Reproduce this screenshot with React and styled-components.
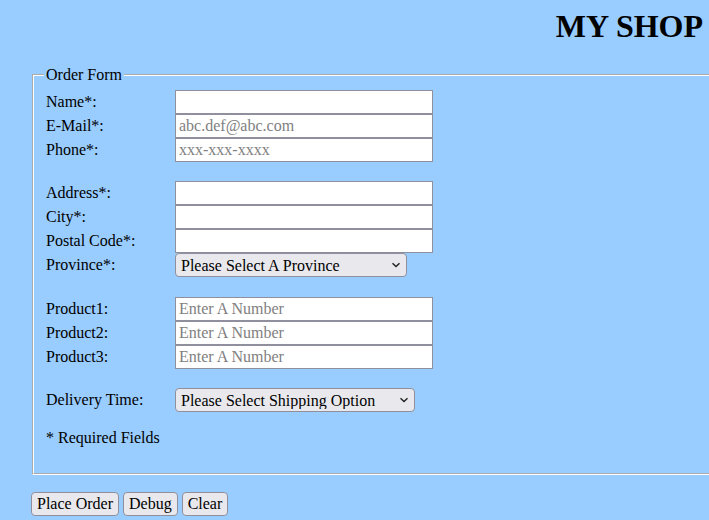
import styled, { createGlobalStyle } from "styled-components";

const GlobalStyle = createGlobalStyle`
  html {
    overflow: hidden;
  }
  body {
    margin: 8px 0 8px 8px;
    background: #99ccff;
    font-family: "Liberation Serif", "Times New Roman", serif;
    font-size: 16px;
    color: #000;
  }
`;

const groups = [
  {
    top: 0,
    fields: [
      { label: "Name*:", type: "text" },
      { label: "E-Mail*:", type: "text", placeholder: "abc.def@abc.com" },
      { label: "Phone*:", type: "text", placeholder: "xxx-xxx-xxxx" },
    ],
  },
  {
    top: 19,
    fields: [
      { label: "Address*:", type: "text" },
      { label: "City*:", type: "text" },
      { label: "Postal Code*:", type: "text" },
      { label: "Province*:", type: "select", option: "Please Select A Province", width: 232 },
    ],
  },
  {
    top: 20,
    fields: [
      { label: "Product1:", type: "text", placeholder: "Enter A Number" },
      { label: "Product2:", type: "text", placeholder: "Enter A Number" },
      { label: "Product3:", type: "text", placeholder: "Enter A Number" },
    ],
  },
  {
    top: 19,
    fields: [
      { label: "Delivery Time:", type: "select", option: "Please Select Shipping Option", width: 240 },
    ],
  },
];

const Chevron = () => (
  <svg width="10" height="6" viewBox="0 0 10 6">
    <path d="M1.5 1.2 L5 4.6 L8.5 1.2" fill="none" stroke="#222" strokeWidth="1.4" />
  </svg>
);

const Field = ({ field }) => (
  <Row>
    <Label>{field.label}</Label>
    {field.type === "select" ? (
      <SelectWrap $width={field.width}>
        <Select>
          <option>{field.option}</option>
        </Select>
        <Arrow>
          <Chevron />
        </Arrow>
      </SelectWrap>
    ) : (
      <Input type="text" placeholder={field.placeholder} />
    )}
  </Row>
);

const App = () => {
  return (
    <>
      <GlobalStyle />
      <Title>MY SHOP</Title>
      <Form onSubmit={(e) => e.preventDefault()}>
        <Fieldset>
          <Legend>Order Form</Legend>
          {groups.map((group, i) => (
            <Group key={i} $top={group.top}>
              {group.fields.map((field) => (
                <Field key={field.label} field={field} />
              ))}
            </Group>
          ))}
          <Note>* Required Fields</Note>
        </Fieldset>
        <Buttons>
          <Button type="submit">Place Order</Button>
          <Button type="button">Debug</Button>
          <Button type="reset">Clear</Button>
        </Buttons>
      </Form>
    </>
  );
};

export default App;

const Title = styled.h1`
  margin: 0 6px 21px 0;
  text-align: right;
  font-size: 32px;
  font-weight: bold;
  line-height: 37px;
`;

const Form = styled.form`
  padding-left: 23px;
`;

const Fieldset = styled.fieldset`
  margin: 0 -20px 0 1px;
  padding: 6px 12px 10px 12px;
  border: 2px groove #ffffff;
`;

const Legend = styled.legend`
  padding: 0 2px;
  margin-left: -2px;
  line-height: 18px;
`;

const Group = styled.div`
  display: flex;
  flex-direction: column;
  margin-top: ${(p) => p.$top}px;
`;

const Row = styled.div`
  display: grid;
  grid-template-columns: 129px auto;
  align-items: center;
  height: 24px;
`;

const Label = styled.span`
  line-height: 18px;
`;

const Input = styled.input`
  box-sizing: border-box;
  width: 258px;
  height: 24px;
  margin: 0;
  padding: 0 3px;
  border: 1px solid #8f8f9d;
  border-radius: 0;
  background: #fff;
  font-family: "Liberation Serif", "Times New Roman", serif;
  font-size: 16px;
  &::placeholder {
    color: #808080;
  }
`;

const SelectWrap = styled.div`
  position: relative;
  width: ${(p) => p.$width}px;
  height: 24px;
`;

const Select = styled.select`
  appearance: none;
  box-sizing: border-box;
  width: 100%;
  height: 24px;
  margin: 0;
  padding: 0 20px 0 5px;
  border: 1px solid #8f8f9d;
  border-radius: 4px;
  background: #e9e9ed;
  color: #000;
  font-family: "Liberation Serif", "Times New Roman", serif;
  font-size: 16px;
`;

const Arrow = styled.span`
  position: absolute;
  right: 6px;
  top: 9px;
  display: flex;
  pointer-events: none;
`;

const Note = styled.p`
  margin: 17px 0 16px 0;
  line-height: 18px;
`;

const Buttons = styled.div`
  display: flex;
  gap: 4px;
  margin-top: 17px;
`;

const Button = styled.button`
  box-sizing: border-box;
  height: 24px;
  padding: 0 5px;
  border: 1px solid #8f8f9d;
  border-radius: 4px;
  background: #e9e9ed;
  color: #000;
  font-family: "Liberation Serif", "Times New Roman", serif;
  font-size: 16px;
`;
